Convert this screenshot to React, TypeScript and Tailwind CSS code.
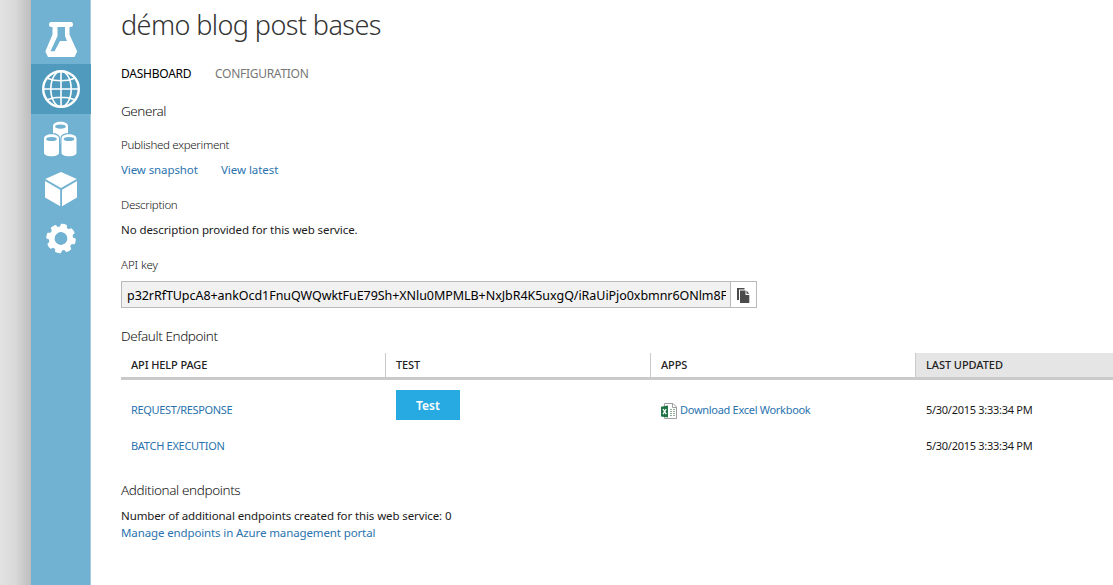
import type { ReactNode } from "react";

function Flask() {
  return (
    <svg className="block h-[50px] w-[60px]" viewBox="0 0 60 50" fill="#fff">
      <rect x="18" y="8" width="24" height="5" rx="2.3" />
      <path
        fillRule="evenodd"
        d="M21.500 12V20.500L14.300 37.500L17 43H43.500L46.200 37.500L38.500 20.500V12ZM26.500 12H34V22L36 27H29L23.500 37.200H19.500L26.500 22Z"
      />
    </svg>
  );
}

function Globe() {
  return (
    <svg className="block h-[50px] w-[60px]" viewBox="0 0 60 50" fill="none" stroke="#fff" strokeWidth="1.600">
      <circle cx="30" cy="25" r="17.800" strokeWidth="2.400" />
      <ellipse cx="30" cy="25" rx="10.200" ry="17.800" />
      <path d="M30 7V43M12 25H48M17 14.500C24 17.500 36 17.500 43 14.500M17 35.500C24 32.500 36 32.500 43 35.500" />
    </svg>
  );
}

function Can({ x, y }: { x: number; y: number }) {
  return (
    <g transform={`translate(${x} ${y})`}>
      <path d="M0 4.500C0 1.700 3 0 7.500 0S15 1.700 15 4.500V18.500C15 20.500 12 22 7.500 22S0 20.500 0 18.500Z" fill="#fff" stroke="#71b1d1" strokeWidth="2.400" paintOrder="stroke" />
      <ellipse cx="7.500" cy="4.800" rx="5.300" ry="2.100" fill="#71b1d1" />
    </g>
  );
}

function Cans() {
  return (
    <svg className="block h-[50px] w-[60px]" viewBox="0 0 60 50">
      <Can x={22} y={7.800} />
      <Can x={13} y={20.200} />
      <Can x={30.500} y={20.200} />
    </svg>
  );
}

function Cube() {
  return (
    <svg className="block h-[50px] w-[60px]" viewBox="0 0 60 50" fill="#fff">
      <path d="M30 8L45.800 15L30 24L14.200 15ZM14 17L29.200 25.700V42.300L14 33.500ZM46 17L31 25.700V42.300L46 33.500Z" />
    </svg>
  );
}

const teeth = [0, 45, 90, 135, 180, 225, 270, 315];

function Gear() {
  return (
    <svg className="block h-[50px] w-[60px]" viewBox="0 0 60 50">
      <g transform="translate(30 24.500) rotate(12)">
        {teeth.map((a) => (
          <path key={a} d="M-3.300 -10L-2.500 -14Q0 -14.700 2.500 -14L3.300 -10Z" fill="#fff" stroke="#fff" strokeLinejoin="round" transform={`rotate(${a})`} />
        ))}
        <circle r="9.200" fill="none" stroke="#fff" strokeWidth="5.600" />
      </g>
    </svg>
  );
}

function CopyIcon() {
  return (
    <svg className="block h-[16px] w-[14px]" viewBox="0 0 14 16" fill="#4b4b4b">
      <path d="M0 0H7.500V1.500H2V12H0Z" />
      <path d="M3 2.500H8.500V7H12.300V15H3Z" />
      <path d="M9.500 2.500L12.300 5.800H9.500Z" />
    </svg>
  );
}

function ExcelIcon() {
  return (
    <svg className="block h-[17px] w-[17px]" viewBox="0 0 17 17">
      <path d="M3.500 .5H12L15.500 4V15.500H3.500Z" fill="#fff" stroke="#a0a0a0" />
      <path d="M11.500 .7V4.500H15.500" fill="none" stroke="#a0a0a0" />
      <path d="M9 6.500H14M9 8.500H14M9 10.500H14M9 12.500H14" stroke="#8fae9b" strokeDasharray="2 1" />
      <path d="M0 3.700L7 2.500V14.500L0 13.500Z" fill="#1f7246" />
      <path d="M2 6L5.200 11.200M5.200 6L2 11.200" stroke="#fff" strokeWidth="1.300" />
    </svg>
  );
}

function Heading({ children }: { children: ReactNode }) {
  return <h2 className="h-[20px] text-[13.500px] leading-[20px] font-light text-[#111]">{children}</h2>;
}

function Label({ children }: { children: ReactNode }) {
  return <div className="h-[20px] text-[11.500px] leading-[20px] font-light text-[#111]">{children}</div>;
}

export default function App() {
  return (
    <div className="flex h-[585px] w-[1113px] overflow-hidden bg-white font-['Noto_Sans',sans-serif] whitespace-nowrap">
      <div className="w-[31px] shrink-0 bg-linear-to-r from-[#e3e3e3] via-[#d8d8d8] to-[#bdbdbd]" />
      <nav className="flex w-[60px] shrink-0 flex-col border-r border-[#a9c9dc] bg-[#71b1d1] pt-[14px]">
        <Flask />
        <div className="w-[60px] bg-[#509bbd]"><Globe /></div>
        <Cans />
        <Cube />
        <Gear />
      </nav>

      <main className="flex min-w-0 grow flex-col pl-[30px] text-[11.500px] text-[#1a1a1a]">
        <h1 className="h-[50px] text-[27px] leading-[50px] font-light tracking-[-0.59px] text-[#333]">démo blog post bases</h1>
        <div className="mt-[14px] flex h-[20px] gap-[23px] text-[12px] leading-[20px]">
          <span className="w-[71px] tracking-[-0.24px] text-black">DASHBOARD</span>
          <span className="tracking-[-0.28px] text-[#777]">CONFIGURATION</span>
        </div>
        <div className="mt-[17px] tracking-[-0.45px]"><Heading>General</Heading></div>

        <div className="mt-[14px] tracking-[-0.3px]"><Label>Published experiment</Label></div>
        <div className="mt-[5px] flex h-[20px] leading-[20px] text-[#2a73ae]">
          <a className="w-[100px] tracking-[-0.1px]">View snapshot</a>
          <a className="tracking-[-0.05px]">View latest</a>
        </div>
        <div className="mt-[15px] tracking-[-0.3px]"><Label>Description</Label></div>
        <p className="mt-[5px] h-[20px] leading-[20px] tracking-[-0.09px]">No description provided for this web service.</p>
        <div className="mt-[15px] tracking-[-0.1px]"><Label>API key</Label></div>

        <div className="mt-[6px] flex h-[27px] w-[636px] border border-[#bababa]">
          <div className="w-[609px] border-r border-[#bababa] bg-[#f1f1f1] pr-[4px] pl-[5px]">
            <div className="h-[25px] overflow-hidden text-[12.500px] leading-[27px] tracking-[-0.055px] text-black">
              p32rRfTUpcA8+ankOcd1FnuQWQwktFuE79Sh+XNlu0MPMLB+NxJbR4K5uxgQ/iRaUiPjo0xbmnr6ONlm8F
            </div>
          </div>
          <div className="flex grow pt-[6px] pl-[6px]"><CopyIcon /></div>
        </div>

        <div className="mt-[18px] tracking-[-0.41px]"><Heading>Default Endpoint</Heading></div>

        <div className="mt-[7px] grid h-[27px] w-[1000px] grid-cols-[264px_265px_265px_1fr] border-b-[3px] border-[#cacaca] text-[11px] leading-[24px] font-medium text-[#222]">
          <div className="pl-[10px] tracking-[-0.12px]">API HELP PAGE</div>
          <div className="border-l border-[#cacaca] pl-[10px] tracking-[-0.1px]">TEST</div>
          <div className="border-l border-[#cacaca] pl-[10px] tracking-[-0.1px]">APPS</div>
          <div className="border-l border-[#cacaca] bg-[#e5e5e5] pl-[10px] tracking-[-0.06px]">LAST UPDATED</div>
        </div>
        <div className="mt-[10px] grid h-[38px] w-[1000px] grid-cols-[264px_265px_265px_1fr] text-[11px] leading-[20px]">
          <a className="pt-[10px] pl-[10px] tracking-[-0.34px] text-[#2a73ae]">REQUEST/RESPONSE</a>
          <div className="pl-[11px]">
            <button className="block h-[30px] w-[64px] bg-[#27a9e1] text-center text-[12px] leading-[32px] font-semibold text-white">Test</button>
          </div>
          <div className="flex pt-[10px] pl-[11px] text-[#2a73ae]">
            <div className="mr-[2px] pt-[3px]"><ExcelIcon /></div>
            <a className="tracking-[-0.29px]">Download Excel Workbook</a>
          </div>
          <div className="pt-[10px] pl-[11px] tracking-[-0.28px]">5/30/2015 3:33:34 PM</div>
        </div>
        <div className="mt-[8px] grid h-[20px] w-[1000px] grid-cols-[264px_265px_265px_1fr] text-[11px] leading-[20px]">
          <a className="pl-[10px] tracking-[-0.28px] text-[#2a73ae]">BATCH EXECUTION</a>
          <div />
          <div />
          <div className="pl-[11px] tracking-[-0.28px]">5/30/2015 3:33:34 PM</div>
        </div>

        <div className="mt-[24px] tracking-[-0.38px]"><Heading>Additional endpoints</Heading></div>
        <p className="mt-[7px] h-[17px] leading-[17px] tracking-[-0.11px]">Number of additional endpoints created for this web service: 0</p>
        <a className="h-[17px] leading-[17px] tracking-[-0.12px] text-[#2a73ae]">Manage endpoints in Azure management portal</a>
      </main>
    </div>
  );
}
